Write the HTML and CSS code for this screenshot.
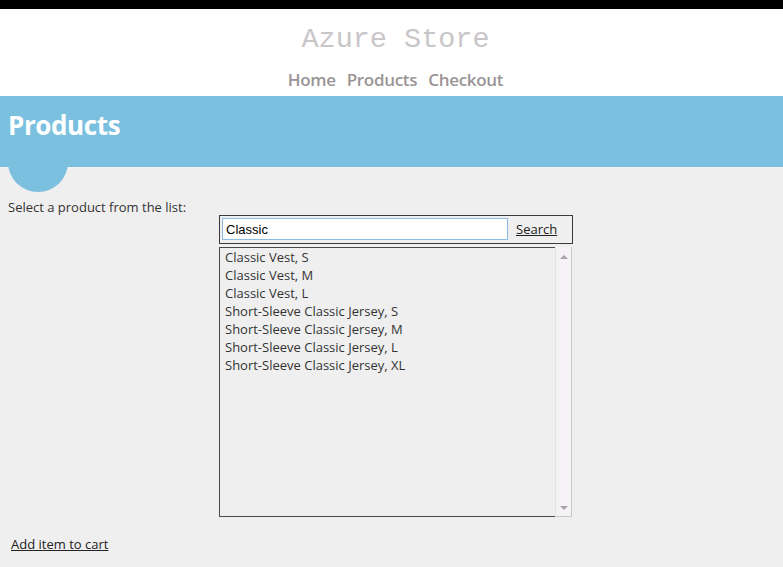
FILE: index.html
```html
<!DOCTYPE html>
<html>
<head>
<meta charset="utf-8">
<title>Azure Store</title>
<link rel="stylesheet" href="styles.css">
</head>
<body>
<div class="topbar"></div>
<header class="site-header">
  <div class="site-title">Azure Store</div>
  <nav class="site-nav">
    <a href="#">Home</a>
    <a href="#">Products</a>
    <a href="#">Checkout</a>
  </nav>
</header>
<section class="band">
  <h1>Products</h1>
</section>
<main class="content">
  <p class="prompt">Select a product from the list:</p>
  <div class="picker">
    <div class="search-box">
      <input class="search-input" type="text" value="Classic">
      <a href="#" class="search-link">Search</a>
    </div>
    <div class="listbox">
      <ul class="items">
        <li>Classic Vest, S</li>
        <li>Classic Vest, M</li>
        <li>Classic Vest, L</li>
        <li>Short-Sleeve Classic Jersey, S</li>
        <li>Short-Sleeve Classic Jersey, M</li>
        <li>Short-Sleeve Classic Jersey, L</li>
        <li>Short-Sleeve Classic Jersey, XL</li>
      </ul>
      <div class="scrollbar">
        <span class="arrow up"></span>
        <span class="arrow down"></span>
      </div>
    </div>
  </div>
  <a href="#" class="add-link">Add item to cart</a>
</main>
</body>
</html>
```
FILE: styles.css
```css
html, body {
  margin: 0;
  padding: 0;
}
body {
  background: #efefef;
  font-family: "Open Sans", "Noto Sans", sans-serif;
  color: #333;
  height: 567px;
  overflow: hidden;
}
.topbar {
  height: 9px;
  background: #000;
}
.site-header {
  background: #fff;
  height: 87px;
  display: flex;
  flex-direction: column;
  align-items: center;
}
.site-title {
  font-family: "Liberation Mono", "DejaVu Sans Mono", monospace;
  font-size: 28.5px;
  color: #c9c6c9;
  line-height: 34px;
  margin-top: 14px;
  margin-left: 8px;
}
.site-nav {
  margin-top: 13px;
  display: flex;
  gap: 11px;
  margin-left: 8px;
}
.site-nav a {
  font-family: "Open Sans", sans-serif;
  font-weight: 600;
  font-size: 17px;
  line-height: 20px;
  color: #9a9496;
  text-decoration: none;
  letter-spacing: -0.3px;
}
.band {
  position: relative;
  background: #7bc1df;
  height: 71px;
}
.band::after {
  content: "";
  position: absolute;
  left: 8px;
  top: 36px;
  width: 60px;
  height: 60px;
  border-radius: 50%;
  background: #7bc1df;
  z-index: 0;
}
.band h1 {
  position: relative;
  z-index: 1;
  margin: 0;
  padding: 12px 0 0 8px;
  font-family: "Open Sans", sans-serif;
  font-weight: 700;
  font-size: 26px;
  line-height: 34px;
  color: #fff;
  letter-spacing: -0.4px;
}
.content {
  padding: 0 0 0 8px;
}
.prompt {
  margin: 0;
  padding-top: 32px;
  font-size: 13px;
  line-height: 16px;
  color: #333;
}
.picker {
  margin-left: 211px;
  margin-top: 0;
  width: 354px;
}
.search-box {
  box-sizing: border-box;
  height: 29px;
  border: 1px solid #3a3a3a;
  display: flex;
  align-items: center;
  padding: 0 0 1px 2px;
}
.search-input {
  box-sizing: border-box;
  width: 286px;
  height: 22px;
  border: 1px solid #8cbbe6;
  background: #fff;
  margin: 0;
  padding: 0 3px;
  font-family: "Liberation Sans", Arial, sans-serif;
  font-size: 13px;
  color: #000;
  outline: none;
}
.search-link {
  margin-left: 8px;
  font-size: 13px;
  color: #222;
  text-decoration: underline;
}
.listbox {
  box-sizing: border-box;
  margin-top: 3px;
  width: 353px;
  height: 270px;
  border: 1px solid #4a4a4a;
  border-right: none;
  display: flex;
}
.items {
  list-style: none;
  margin: 0;
  padding: 0 0 0 5px;
  flex: 1;
  font-size: 13px;
  line-height: 18px;
  color: #333;
}
.scrollbar {
  box-sizing: border-box;
  width: 17px;
  margin-top: -1px;
  margin-bottom: -1px;
  background: #f5f3f6;
  border-left: 1px solid #e2e0e3;
  border-right: 1px solid #c9c7ca;
  border-bottom: 1px solid #c9c7ca;
  display: flex;
  flex-direction: column;
  justify-content: space-between;
  align-items: center;
  padding: 8px 0 6px;
}
.arrow {
  width: 0;
  height: 0;
  border-left: 4px solid transparent;
  border-right: 4px solid transparent;
}
.arrow.up {
  border-bottom: 4px solid #a8a6a9;
}
.arrow.down {
  border-top: 4px solid #a8a6a9;
}
.add-link {
  display: inline-block;
  margin-top: 18px;
  margin-left: 3px;
  font-size: 13px;
  color: #222;
  text-decoration: underline;
}
```
